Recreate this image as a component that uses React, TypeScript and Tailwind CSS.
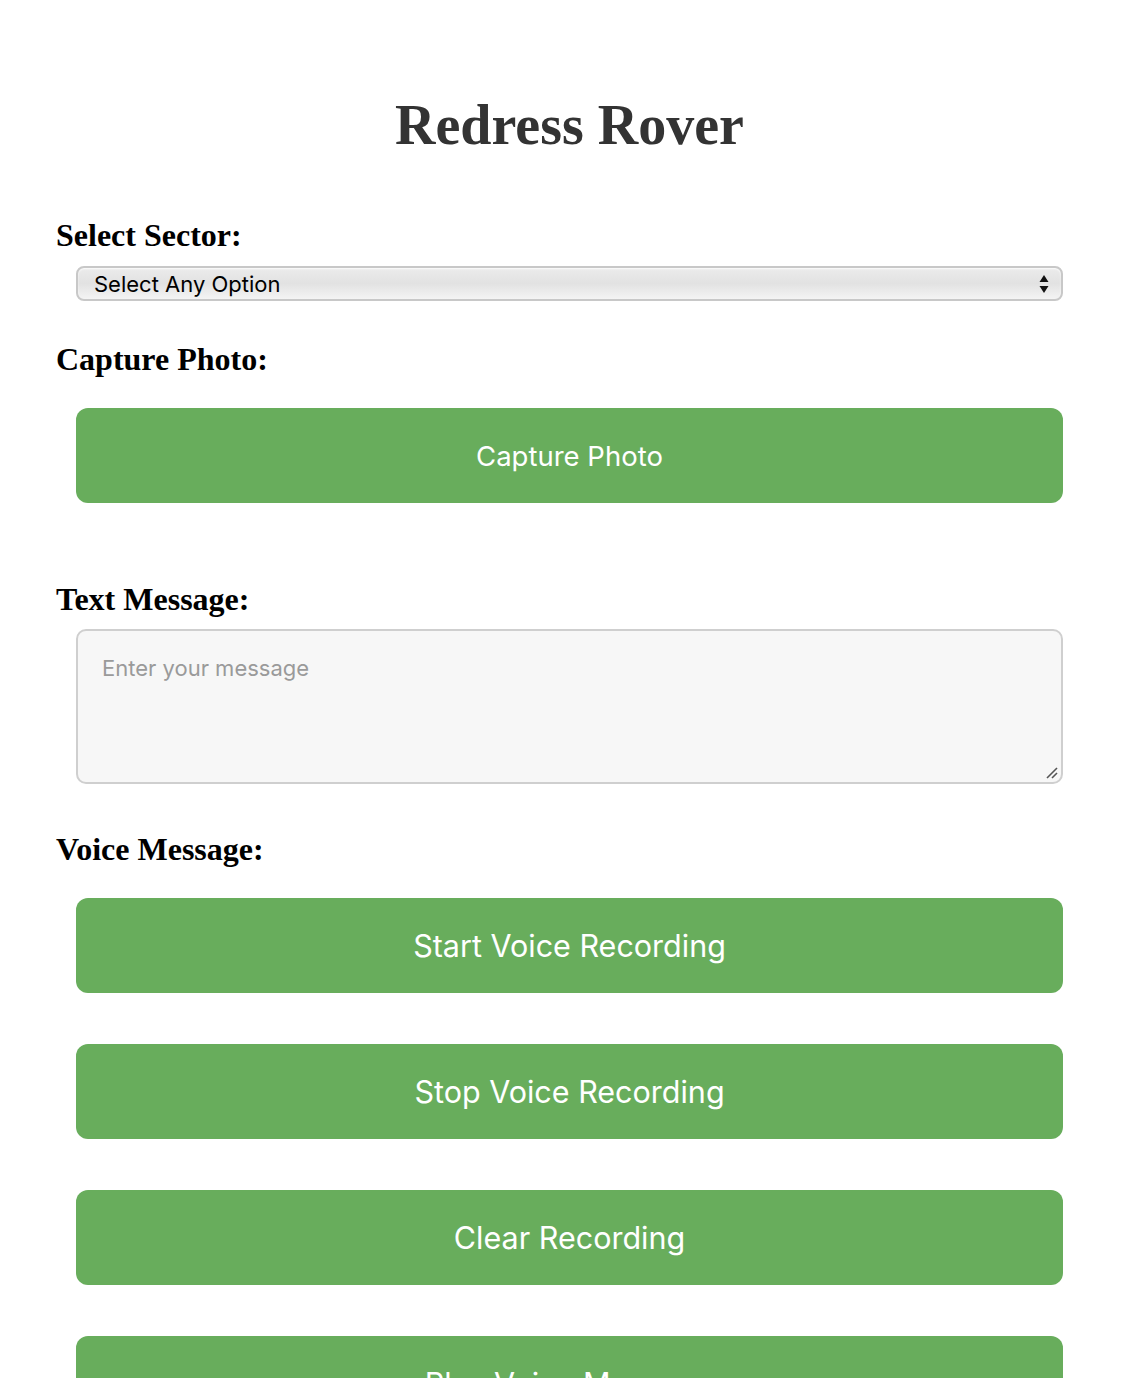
import React from "react";

function Label({ children, className = "" }: { children: React.ReactNode; className?: string }) {
  return (
    <div
      className={`font-['Liberation_Serif',serif] font-bold text-[32px] leading-[40px] text-black ${className}`}
    >
      {children}
    </div>
  );
}

function GreenButton({ children, className = "" }: { children: React.ReactNode; className?: string }) {
  return (
    <button
      className={`mx-[20px] block w-[987px] h-[95px] rounded-[12px] bg-[#68ad5c] text-white font-['Inter',sans-serif] shrink-0 ${className}`}
    >
      {children}
    </button>
  );
}

export default function App() {
  return (
    <div className="w-[1132px] h-[1378px] overflow-hidden bg-white">
      <div className="ml-[56px] w-[1027px] flex flex-col">
        <h1 className="mt-[93px] text-center font-['Liberation_Serif',serif] font-bold text-[56px] leading-[64px] text-[#333333]">
          Redress Rover
        </h1>

        <Label className="mt-[58px]">Select Sector:</Label>
        <div className="relative mx-[20px] mt-[11px] h-[35px] w-[987px] rounded-[8px] border-2 border-[#c8c8c8] bg-gradient-to-b from-[#ebebeb] via-[#e2e2e2] to-[#f4f4f4] shadow-[inset_0_1px_2px_rgba(255,255,255,0.9)]">
          <select
            className="h-full w-full appearance-none bg-transparent pl-[16px] text-[22px] text-black font-['Inter',sans-serif] outline-none"
            defaultValue=""
          >
            <option value="">Select Any Option</option>
          </select>
          <svg
            className="pointer-events-none absolute right-[12px] top-[6px]"
            width="10"
            height="20"
            viewBox="0 0 10 20"
          >
            <path d="M5 1 L9.5 8 L0.5 8 Z" fill="#111" />
            <path d="M5 19 L9.5 12 L0.5 12 Z" fill="#111" />
          </svg>
        </div>

        <Label className="mt-[38px]">Capture Photo:</Label>
        <GreenButton className="mt-[29px] h-[94px] pt-[2px] text-[27.5px]">Capture Photo</GreenButton>

        <Label className="mt-[76px]">Text Message:</Label>
        <div className="relative mx-[20px] mt-[10px] h-[155px] w-[987px]">
          <textarea
            className="block h-full w-full resize-none rounded-[10px] border-2 border-[#cfcfcf] bg-[#f7f7f7] px-[24px] pt-[22px] text-[22px] leading-[30px] font-['Inter',sans-serif] text-black placeholder:text-[#9a9a9a] outline-none"
            placeholder="Enter your message"
          />
          <svg
            className="pointer-events-none absolute right-[4px] bottom-[4px]"
            width="14"
            height="14"
            viewBox="0 0 14 14"
          >
            <path d="M2 12 L12 2" stroke="#555" strokeWidth="1.6" />
            <path d="M7 12 L12 7" stroke="#555" strokeWidth="1.6" />
          </svg>
        </div>

        <Label className="mt-[45px]">Voice Message:</Label>
        <GreenButton className="mt-[29px] text-[30.5px]">Start Voice Recording</GreenButton>
        <GreenButton className="mt-[51px] text-[30.5px]">Stop Voice Recording</GreenButton>
        <GreenButton className="mt-[51px] text-[30.5px]">Clear Recording</GreenButton>
        <GreenButton className="mt-[51px] text-[30.5px]">Play Voice Message</GreenButton>
      </div>
    </div>
  );
}
